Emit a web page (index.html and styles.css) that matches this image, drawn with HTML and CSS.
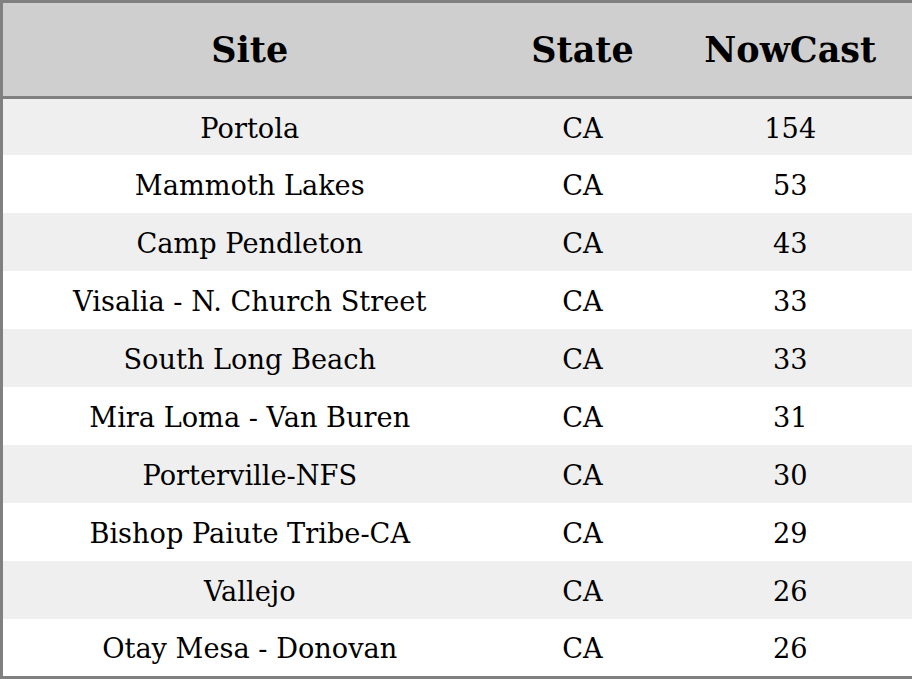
FILE: index.html
```html
<!DOCTYPE html>
<html>
<head>
<meta charset="utf-8">
<link rel="stylesheet" href="styles.css">
</head>
<body>
<table class="aq">
  <colgroup><col class="c-site"><col class="c-state"><col class="c-now"></colgroup>
  <thead>
    <tr><th>Site</th><th>State</th><th>NowCast</th></tr>
  </thead>
  <tbody>
    <tr class="first"><td>Portola</td><td>CA</td><td>154</td></tr>
    <tr><td>Mammoth Lakes</td><td>CA</td><td>53</td></tr>
    <tr><td>Camp Pendleton</td><td>CA</td><td>43</td></tr>
    <tr><td>Visalia - N. Church Street</td><td>CA</td><td>33</td></tr>
    <tr><td>South Long Beach</td><td>CA</td><td>33</td></tr>
    <tr><td>Mira Loma - Van Buren</td><td>CA</td><td>31</td></tr>
    <tr><td>Porterville-NFS</td><td>CA</td><td>30</td></tr>
    <tr><td>Bishop Paiute Tribe-CA</td><td>CA</td><td>29</td></tr>
    <tr><td>Vallejo</td><td>CA</td><td>26</td></tr>
    <tr class="last"><td>Otay Mesa - Donovan</td><td>CA</td><td>26</td></tr>
  </tbody>
</table>
</body>
</html>
```
FILE: styles.css
```css
html, body {
  margin: 0;
  padding: 0;
  background: #ffffff;
}
.aq {
  width: 912px;
  border-collapse: collapse;
  table-layout: fixed;
  border: 3px solid #808080;
  font-family: "DejaVu Serif", serif;
  color: #000;
}
.c-site { width: 495px; }
.c-state { width: 172px; }
.c-now { width: 245px; }
.aq th {
  background: #cfcfcf;
  height: 93px;
  padding: 0;
  font-size: 35px;
  font-weight: bold;
  text-align: center;
  vertical-align: middle;
  border-bottom: 3px solid #808080;
}
.aq td {
  height: 56px;
  padding: 2px 0 0 0;
  font-size: 27.2px;
  text-align: center;
  vertical-align: middle;
}
.aq tr.first td { height: 54px; }
.aq tr.last td { height: 55px; }
.aq tbody tr:nth-child(odd) { background: #efefef; }
.aq tbody tr:nth-child(even) { background: #ffffff; }
```
